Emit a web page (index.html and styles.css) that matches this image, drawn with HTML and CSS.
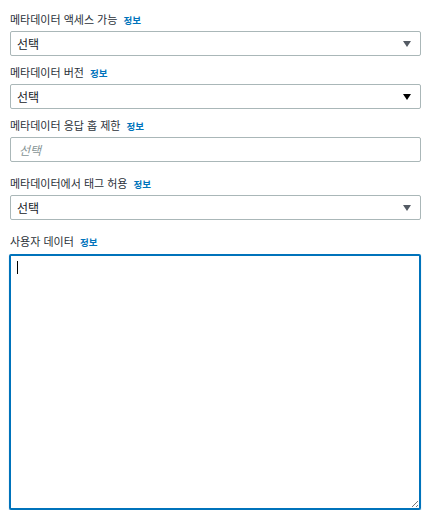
FILE: index.html
```html
<!DOCTYPE html>
<html lang="ko">
<head>
    <meta charset="UTF-8">
    <title>인스턴스 메타데이터 옵션</title>
    <link rel="stylesheet" href="styles.css">
</head>
<body>
    <div class="form">
        <div class="field">
            <label class="field-label">메타데이터 액세스 가능 <a class="info" href="#">정보</a></label>
            <div class="select">
                <span class="select-value">선택</span>
                <span class="caret caret-muted"></span>
            </div>
        </div>

        <div class="field">
            <label class="field-label">메타데이터 버전 <a class="info" href="#">정보</a></label>
            <div class="select">
                <span class="select-value">선택</span>
                <span class="caret"></span>
            </div>
        </div>

        <div class="field field-spaced">
            <label class="field-label">메타데이터 응답 홉 제한 <a class="info" href="#">정보</a></label>
            <input class="text-input" type="text" placeholder="선택">
        </div>

        <div class="field field-spaced">
            <label class="field-label">메타데이터에서 태그 허용 <a class="info" href="#">정보</a></label>
            <div class="select">
                <span class="select-value">선택</span>
                <span class="caret caret-muted"></span>
            </div>
        </div>

        <div class="field">
            <label class="field-label label-tall">사용자 데이터 <a class="info" href="#">정보</a></label>
            <div class="textarea">
                <span class="cursor"></span>
                <span class="grip"></span>
            </div>
        </div>
    </div>
</body>
</html>
```

FILE: styles.css
```css
* { margin: 0; padding: 0; box-sizing: border-box; }

body {
    background: #fff;
    font-family: "Noto Sans CJK KR", "Noto Sans", sans-serif;
    color: #16191f;
}

.form {
    width: 437px;
    padding: 12px 16px 0 10px;
    display: flex;
    flex-direction: column;
    gap: 9px;
}

/* extra breathing room below the hop-limit input */
.field-spaced { margin-bottom: 5px; }

.field-label {
    display: block;
    height: 14px;
    font-size: 11px;
    line-height: 14px;
    margin-bottom: 5px;
    color: #2a3038;
    overflow: hidden;
}

.label-tall { margin-bottom: 6px; }

.info {
    color: #0073bb;
    font-size: 9.5px;
    font-weight: bold;
    text-decoration: none;
    margin-left: 3px;
}

/* --- SELECT / INPUT --- */
.select, .text-input {
    width: 411px;
    height: 25px;
    border: 1px solid #aab7b8;
    border-radius: 2px;
    background: #fff;
}

.select {
    display: flex;
    align-items: center;
    justify-content: space-between;
    padding: 0 9px 0 6px;
}

.select-value { font-size: 12px; }

.caret {
    width: 0;
    height: 0;
    border-left: 4px solid transparent;
    border-right: 4px solid transparent;
    border-top: 6px solid #000;
}

.caret-muted { border-top-color: #545b64; }

.text-input {
    display: block;
    padding: 0 8px;
    font-family: inherit;
    font-size: 12px;
    outline: none;
}

.text-input::placeholder { color: #879596; font-style: italic; }

/* --- TEXTAREA (focused) --- */
.textarea {
    position: relative;
    width: 412px;
    height: 256px;
    margin-left: -1px;
    border: 2px solid #0073bb;
    border-radius: 2px;
    box-shadow: 0 1px 1px rgba(0, 115, 187, 0.5);
}

.cursor {
    position: absolute;
    left: 6px;
    top: 5px;
    width: 1px;
    height: 13px;
    background: #000;
}

.grip {
    position: absolute;
    right: 1px;
    bottom: 1px;
    width: 9px;
    height: 9px;
    background: repeating-linear-gradient(135deg, transparent 0 2px, #777 2px 3px);
    clip-path: polygon(100% 0, 100% 100%, 0 100%);
}
```
